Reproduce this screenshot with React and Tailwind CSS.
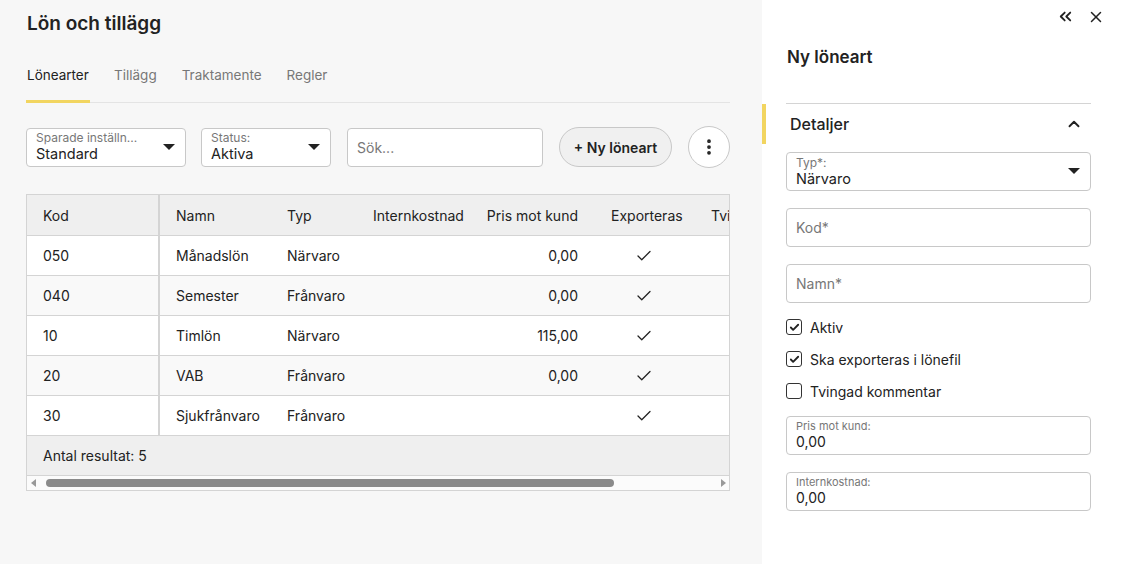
import { ChevronsLeft, X, ChevronUp, Check, EllipsisVertical } from 'lucide-react'

const rows = [
  { kod: '050', namn: 'Månadslön', typ: 'Närvaro', pris: '0,00' },
  { kod: '040', namn: 'Semester', typ: 'Frånvaro', pris: '0,00' },
  { kod: '10', namn: 'Timlön', typ: 'Närvaro', pris: '115,00' },
  { kod: '20', namn: 'VAB', typ: 'Frånvaro', pris: '0,00' },
  { kod: '30', namn: 'Sjukfrånvaro', typ: 'Frånvaro', pris: '' },
]

// liten nedåtpil för selects
function Caret() {
  return (
    <svg width="12" height="7" viewBox="0 0 12 7" className="shrink-0">
      <path d="M0 0 L12 0 L6 6 Z" fill="#222" />
    </svg>
  )
}

function SelectBox({ label, value, className }) {
  return (
    <div className={`h-[39px] rounded-[4px] border border-[#c8c8c8] bg-white flex items-center pl-[9px] pr-[10px] ${className}`}>
      <div className="flex-1 flex flex-col leading-none">
        <span className="text-[12px] text-[#777] leading-[14px]">{label}</span>
        <span className="text-[14.5px] text-[#222] leading-[18px]">{value}</span>
      </div>
      <Caret />
    </div>
  )
}

function Checkbox({ checked, label }) {
  return (
    <div className="flex items-center gap-[8px] h-[20px]">
      <div className="w-[16px] h-[16px] rounded-[3px] border-[1.5px] border-[#333] flex items-center justify-center">
        {checked && <Check size={11} strokeWidth={4} color="#222" />}
      </div>
      <span className="text-[14px] text-[#222]">{label}</span>
    </div>
  )
}

export default function App() {
  return (
    <div className="w-[1123px] h-[564px] flex overflow-hidden text-[#222]" style={{ fontFamily: 'Inter, "Noto Sans", sans-serif' }}>
      {/* vänster del */}
      <div className="w-[762px] bg-[#f7f7f7] pl-[26px] pr-[32px] pt-[12px]">
        <h1 className="text-[19px] font-semibold leading-[24px] pl-[1px]">Lön och tillägg</h1>

        <div className="mt-[29px] flex border-b border-[#e4e4e4] text-[13.5px]">
          <div className="pl-[1px] w-[64px] pb-[15px] border-b-[3px] border-[#f2d560] -mb-px text-[#222]">Lönearter</div>
          <div className="ml-[24px] pb-[15px] text-[#777]">Tillägg</div>
          <div className="ml-[25px] pb-[15px] text-[#777]">Traktamente</div>
          <div className="ml-[25px] pb-[15px] text-[#777]">Regler</div>
        </div>

        <div className="mt-[23px] flex items-center">
          <SelectBox label="Sparade inställn..." value="Standard" className="w-[160px]" />
          <SelectBox label="Status:" value="Aktiva" className="w-[130px] ml-[15px]" />
          <div className="ml-[16px] w-[196px] h-[39px] rounded-[4px] border border-[#c8c8c8] bg-white flex items-center px-[9px] text-[14px] text-[#777]">Sök...</div>
          <button className="ml-[16px] w-[113px] h-[40px] rounded-full border border-[#c8c8c8] bg-[#f0f0f0] text-[14px] font-semibold">+ Ny löneart</button>
          <div className="ml-[16px] w-[42px] h-[42px] rounded-full border border-[#c8c8c8] bg-white flex items-center justify-center">
            <EllipsisVertical size={20} strokeWidth={2.5} />
          </div>
        </div>

        <div className="mt-[26px] w-[704px] border border-[#d4d4d4] bg-white text-[14px]">
          <div className="overflow-hidden">
            <div className="w-[780px]">
              <div className="flex h-[41px] items-center bg-[#efefef] border-b border-[#d4d4d4]">
                <div className="w-[133px] shrink-0 h-full flex items-center pl-[16px] border-r-2 border-[#d4d4d4]">Kod</div>
                <div className="w-[111px] shrink-0 pl-[16px]">Namn</div>
                <div className="w-[86px] shrink-0 pl-[16px]">Typ</div>
                <div className="w-[104px] shrink-0 pl-[16px] whitespace-nowrap">Internkostnad</div>
                <div className="w-[129px] shrink-0 pr-[12px] text-right whitespace-nowrap">Pris mot kund</div>
                <div className="w-[108px] shrink-0 pl-[21px]">Exporteras</div>
                <div className="shrink-0 pl-[13px] whitespace-nowrap">Tvingad</div>
              </div>
              {rows.map((r, i) => (
                <div key={r.kod} className={`flex h-[40px] items-center border-b border-[#d4d4d4] ${i % 2 ? 'bg-[#f9f9f9]' : 'bg-white'}`}>
                  <div className="w-[133px] shrink-0 h-full flex items-center pl-[16px] border-r-2 border-[#d4d4d4]">{r.kod}</div>
                  <div className="w-[111px] shrink-0 pl-[16px]">{r.namn}</div>
                  <div className="w-[86px] shrink-0 pl-[16px]">{r.typ}</div>
                  <div className="w-[104px] shrink-0"></div>
                  <div className="w-[129px] shrink-0 pr-[12px] text-right">{r.pris}</div>
                  <div className="w-[108px] shrink-0 flex justify-center">
                    <Check size={18} strokeWidth={1.7} />
                  </div>
                </div>
              ))}
            </div>
          </div>
          <div className="h-[40px] bg-[#efefef] flex items-center pl-[16px] border-b border-[#d4d4d4]">Antal resultat: 5</div>
          <div className="h-[14px] bg-[#fbfbfb] flex items-center pl-[4px] pr-[3px] gap-[10px]">
            <svg width="5" height="8" viewBox="0 0 5 8"><path d="M5 0 L5 8 L0 4 Z" fill="#999" /></svg>
            <div className="w-[568px] h-[8px] rounded-full bg-[#8a8a8a]"></div>
            <div className="flex-1"></div>
            <svg width="5" height="8" viewBox="0 0 5 8"><path d="M0 0 L0 8 L5 4 Z" fill="#999" /></svg>
          </div>
        </div>
      </div>

      {/* höger panel */}
      <div className="flex-1 bg-white pt-[7px] pr-[32px]">
        <div className="flex justify-end items-center gap-[12px] -mr-[14px]">
          <ChevronsLeft size={19} strokeWidth={2.3} />
          <X size={18} strokeWidth={2} />
        </div>
        <h2 className="pl-[25px] mt-[20px] text-[17px] font-semibold leading-[22px]">Ny löneart</h2>
        <div className="ml-[24px] mt-[35px] border-t border-[#d4d4d4]"></div>
        <div className="flex items-center h-[40px] border-l-[4px] border-[#f2d560]">
          <div className="flex-1 pl-[24px] text-[16px] font-medium">Detaljer</div>
          <ChevronUp size={18} strokeWidth={2.5} className="mr-[8px]" />
        </div>
        <div className="pl-[24px] mt-[8px] flex flex-col">
          <SelectBox label="Typ*:" value="Närvaro" className="w-[305px]" />
          <div className="mt-[17px] w-[305px] h-[39px] rounded-[4px] border border-[#c8c8c8] flex items-center px-[9px] text-[14px] text-[#777]">Kod*</div>
          <div className="mt-[17px] w-[305px] h-[39px] rounded-[4px] border border-[#c8c8c8] flex items-center px-[9px] text-[14px] text-[#777]">Namn*</div>
          <div className="mt-[14px] flex flex-col gap-[12px]">
            <Checkbox checked label="Aktiv" />
            <Checkbox checked label="Ska exporteras i lönefil" />
            <Checkbox label="Tvingad kommentar" />
          </div>
          <div className="mt-[15px] w-[305px] h-[39px] rounded-[4px] border border-[#c8c8c8] flex flex-col justify-center px-[9px] leading-none">
            <span className="text-[11px] text-[#777] leading-[13px]">Pris mot kund:</span>
            <span className="text-[14px] leading-[18px]">0,00</span>
          </div>
          <div className="mt-[17px] w-[305px] h-[39px] rounded-[4px] border border-[#c8c8c8] flex flex-col justify-center px-[9px] leading-none">
            <span className="text-[11px] text-[#777] leading-[13px]">Internkostnad:</span>
            <span className="text-[14px] leading-[18px]">0,00</span>
          </div>
        </div>
      </div>
    </div>
  )
}
